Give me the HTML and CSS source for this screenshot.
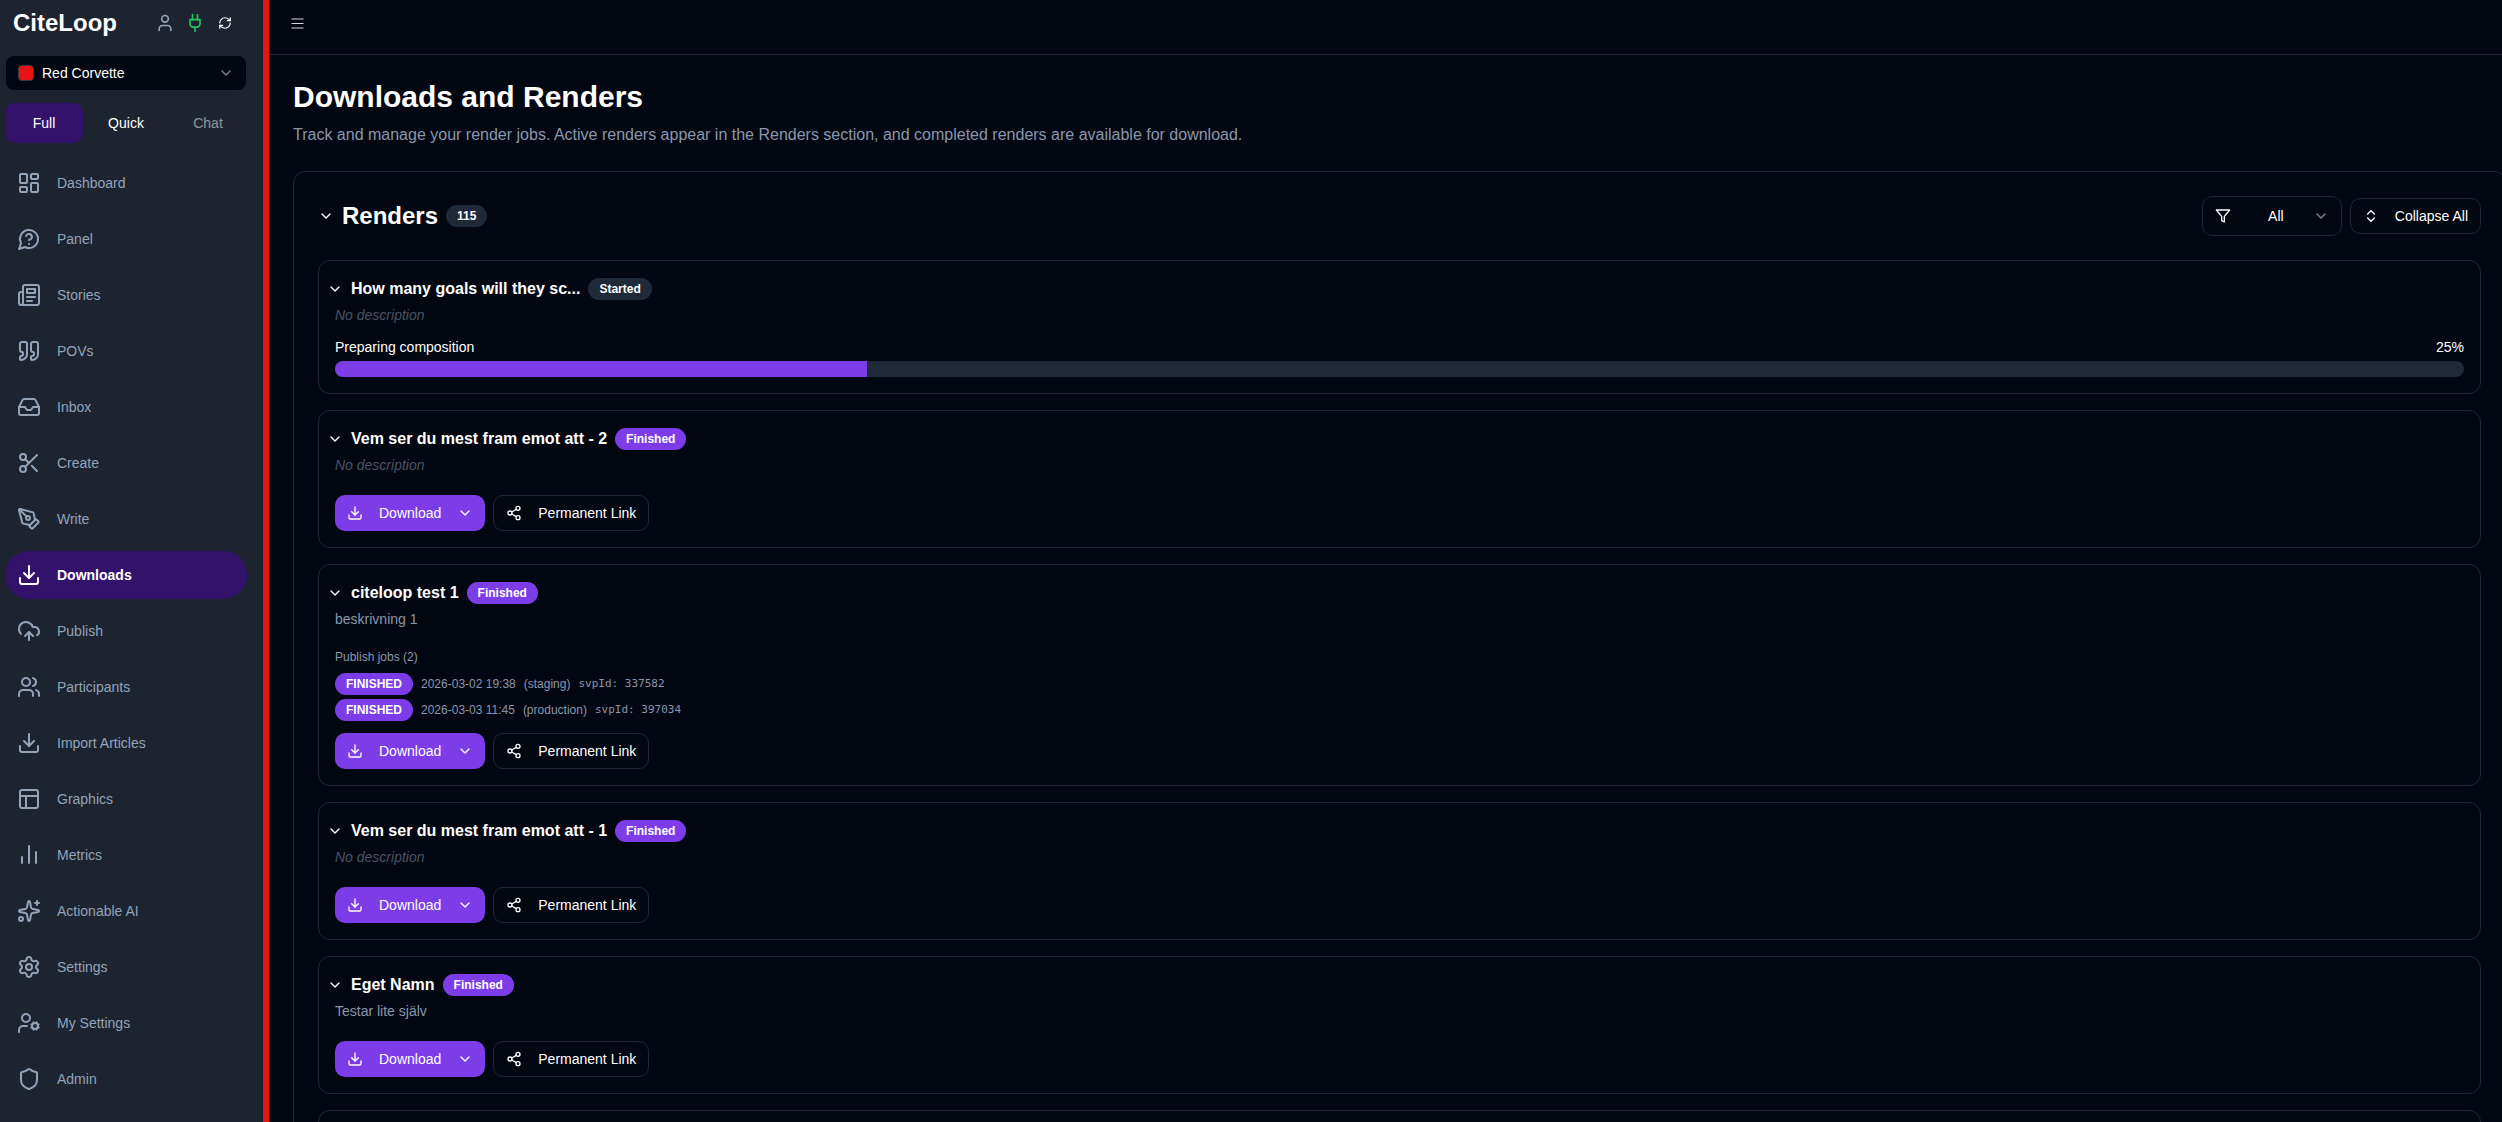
FILE: index.html
```html
<!DOCTYPE html>
<html lang="en">
<head>
<meta charset="utf-8">
<meta name="viewport" content="width=device-width, initial-scale=1">
<title>CiteLoop - Downloads and Renders</title>
<link rel="stylesheet" href="styles.css">
</head>
<body>

<!-- icon sprite -->
<svg class="sprite" aria-hidden="true">
	<symbol id="i-chevron" viewBox="0 0 24 24"><path d="m6 9 6 6 6-6"/></symbol>
	<symbol id="i-user" viewBox="0 0 24 24"><path d="M19 21v-2a4 4 0 0 0-4-4H9a4 4 0 0 0-4 4v2"/><circle cx="12" cy="7" r="4"/></symbol>
	<symbol id="i-plug" viewBox="0 0 24 24"><path d="M12 22v-5"/><path d="M9 8V2"/><path d="M15 8V2"/><path d="M18 8v5a4 4 0 0 1-4 4h-4a4 4 0 0 1-4-4V8Z"/></symbol>
	<symbol id="i-refresh" viewBox="0 0 24 24"><path d="M3 12a9 9 0 0 1 9-9 9.75 9.75 0 0 1 6.74 2.74L21 8"/><path d="M21 3v5h-5"/><path d="M21 12a9 9 0 0 1-9 9 9.75 9.75 0 0 1-6.74-2.74L3 16"/><path d="M8 16H3v5"/></symbol>
	<symbol id="i-menu" viewBox="0 0 15 15"><path d="M1.5 3h12M1.5 7.5h12M1.5 12h12"/></symbol>
	<symbol id="i-dashboard" viewBox="0 0 24 24"><rect width="7" height="9" x="3" y="3" rx="1"/><rect width="7" height="5" x="14" y="3" rx="1"/><rect width="7" height="9" x="14" y="12" rx="1"/><rect width="7" height="5" x="3" y="16" rx="1"/></symbol>
	<symbol id="i-panel" viewBox="0 0 24 24"><path d="M7.9 20A9 9 0 1 0 4 16.1L2 22Z"/><path d="M9.09 9a3 3 0 0 1 5.83 1c0 2-3 3-3 3"/><path d="M12 17h.01"/></symbol>
	<symbol id="i-stories" viewBox="0 0 24 24"><path d="M4 22h16a2 2 0 0 0 2-2V4a2 2 0 0 0-2-2H8a2 2 0 0 0-2 2v16a2 2 0 0 1-2 2Zm0 0a2 2 0 0 1-2-2v-9c0-1.1.9-2 2-2h2"/><path d="M18 14h-8"/><path d="M15 18h-5"/><path d="M10 6h8v4h-8V6Z"/></symbol>
	<symbol id="i-quote" viewBox="0 0 24 24"><path d="M16 3a2 2 0 0 0-2 2v6a2 2 0 0 0 2 2 1 1 0 0 1 1 1v1a2 2 0 0 1-2 2 1 1 0 0 0-1 1v2a1 1 0 0 0 1 1 6 6 0 0 0 6-6V5a2 2 0 0 0-2-2z"/><path d="M5 3a2 2 0 0 0-2 2v6a2 2 0 0 0 2 2 1 1 0 0 1 1 1v1a2 2 0 0 1-2 2 1 1 0 0 0-1 1v2a1 1 0 0 0 1 1 6 6 0 0 0 6-6V5a2 2 0 0 0-2-2z"/></symbol>
	<symbol id="i-inbox" viewBox="0 0 24 24"><path d="M22 12h-6l-2 3h-4l-2-3H2"/><path d="M5.45 5.11 2 12v6a2 2 0 0 0 2 2h16a2 2 0 0 0 2-2v-6l-3.45-6.89A2 2 0 0 0 16.76 4H7.24a2 2 0 0 0-1.79 1.11z"/></symbol>
	<symbol id="i-scissors" viewBox="0 0 24 24"><circle cx="6" cy="6" r="3"/><path d="M8.12 8.12 12 12"/><path d="M20 4 8.12 15.88"/><circle cx="6" cy="18" r="3"/><path d="M14.8 14.8 20 20"/></symbol>
	<symbol id="i-pen" viewBox="0 0 24 24"><path d="M15.707 21.293a1 1 0 0 1-1.414 0l-1.586-1.586a1 1 0 0 1 0-1.414l5.586-5.586a1 1 0 0 1 1.414 0l1.586 1.586a1 1 0 0 1 0 1.414z"/><path d="m18 13-1.375-6.874a1 1 0 0 0-.746-.776L3.235 2.028a1 1 0 0 0-1.207 1.207L5.35 15.879a1 1 0 0 0 .776.746L13 18"/><path d="m2.3 2.3 7.286 7.286"/><circle cx="11" cy="11" r="2"/></symbol>
	<symbol id="i-download" viewBox="0 0 24 24"><path d="M21 15v4a2 2 0 0 1-2 2H5a2 2 0 0 1-2-2v-4"/><path d="m7 10 5 5 5-5"/><path d="M12 15V3"/></symbol>
	<symbol id="i-cloud" viewBox="0 0 24 24"><path d="M12 13v8"/><path d="M4 14.899A7 7 0 1 1 15.71 8h1.79a4.5 4.5 0 0 1 2.5 8.242"/><path d="m8 17 4-4 4 4"/></symbol>
	<symbol id="i-users" viewBox="0 0 24 24"><path d="M16 21v-2a4 4 0 0 0-4-4H6a4 4 0 0 0-4 4v2"/><circle cx="9" cy="7" r="4"/><path d="M22 21v-2a4 4 0 0 0-3-3.87"/><path d="M16 3.13a4 4 0 0 1 0 7.75"/></symbol>
	<symbol id="i-layout" viewBox="0 0 24 24"><rect width="18" height="18" x="3" y="3" rx="2"/><path d="M3 9h18"/><path d="M9 21V9"/></symbol>
	<symbol id="i-metrics" viewBox="0 0 24 24"><path d="M5 20v-6"/><path d="M12 20V3"/><path d="M19 20V9"/></symbol>
	<symbol id="i-sparkles" viewBox="0 0 24 24"><path d="M11.017 2.814a1 1 0 0 1 1.966 0l1.051 5.558a2 2 0 0 0 1.594 1.594l5.558 1.051a1 1 0 0 1 0 1.966l-5.558 1.051a2 2 0 0 0-1.594 1.594l-1.051 5.558a1 1 0 0 1-1.966 0l-1.051-5.558a2 2 0 0 0-1.594-1.594l-5.558-1.051a1 1 0 0 1 0-1.966l5.558-1.051a2 2 0 0 0 1.594-1.594z"/><path d="M20 2v4"/><path d="M22 4h-4"/><circle cx="4" cy="20" r="2"/></symbol>
	<symbol id="i-settings" viewBox="0 0 24 24"><path d="M9.671 4.136a2.34 2.34 0 0 1 4.659 0 2.34 2.34 0 0 0 3.319 1.915 2.34 2.34 0 0 1 2.33 4.033 2.34 2.34 0 0 0 0 3.831 2.34 2.34 0 0 1-2.33 4.033 2.34 2.34 0 0 0-3.319 1.915 2.34 2.34 0 0 1-4.659 0 2.34 2.34 0 0 0-3.32-1.915 2.34 2.34 0 0 1-2.33-4.033 2.34 2.34 0 0 0 0-3.831A2.34 2.34 0 0 1 6.35 6.051a2.34 2.34 0 0 0 3.319-1.915"/><circle cx="12" cy="12" r="3"/></symbol>
	<symbol id="i-usercog" viewBox="0 0 24 24"><path d="M10 15H6a4 4 0 0 0-4 4v2"/><circle cx="9" cy="7" r="4"/><circle cx="18" cy="15" r="3"/><path d="m14.305 16.53.923-.382M15.228 13.852l-.923-.383M16.852 12.228l-.383-.923M16.852 17.772l-.383.924M19.148 12.228l.383-.923M19.53 18.696l-.382-.924M20.772 13.852l.924-.383M20.772 16.148l.924.383"/></symbol>
	<symbol id="i-shield" viewBox="0 0 24 24"><path d="M20 13c0 5-3.5 7.5-7.66 8.95a1 1 0 0 1-.67-.01C7.5 20.5 4 18 4 13V6a1 1 0 0 1 1-1c2 0 4.5-1.2 6.24-2.72a1.17 1.17 0 0 1 1.52 0C14.51 3.81 17 5 19 5a1 1 0 0 1 1 1z"/></symbol>
	<symbol id="i-filter" viewBox="0 0 24 24"><path d="M22 3H2l8 9.46V19l4 2v-8.54L22 3z"/></symbol>
	<symbol id="i-updown" viewBox="0 0 24 24"><path d="m7 15 5 5 5-5"/><path d="m7 9 5-5 5 5"/></symbol>
	<symbol id="i-share" viewBox="0 0 24 24"><circle cx="18" cy="5" r="3"/><circle cx="6" cy="12" r="3"/><circle cx="18" cy="19" r="3"/><path d="m8.59 13.51 6.83 3.98"/><path d="m15.41 6.51-6.82 3.98"/></symbol>
</svg>

<div class="app">
	<aside class="sidebar">
		<div class="brand">
			<span class="logo">CiteLoop</span>
			<div class="brand_icons">
				<button class="icon_btn" aria-label="Account"><svg class="icon md"><use href="#i-user"/></svg></button>
				<button class="icon_btn online" aria-label="Connection"><svg class="icon md"><use href="#i-plug"/></svg></button>
				<button class="icon_btn light" aria-label="Refresh"><svg class="icon xs"><use href="#i-refresh"/></svg></button>
			</div>
		</div>

		<div class="team">
			<span class="swatch"></span>
			<select class="plain_select" aria-label="Team">
				<option>Red Corvette</option>
			</select>
			<svg class="icon dim"><use href="#i-chevron"/></svg>
		</div>

		<div class="modes">
			<button class="mode active">Full</button>
			<button class="mode">Quick</button>
			<button class="mode" disabled>Chat</button>
		</div>

		<nav class="nav">
			<a href="#"><svg class="icon lg"><use href="#i-dashboard"/></svg>Dashboard</a>
			<a href="#"><svg class="icon lg"><use href="#i-panel"/></svg>Panel</a>
			<a href="#"><svg class="icon lg"><use href="#i-stories"/></svg>Stories</a>
			<a href="#"><svg class="icon lg"><use href="#i-quote"/></svg>POVs</a>
			<a href="#"><svg class="icon lg"><use href="#i-inbox"/></svg>Inbox</a>
			<a href="#"><svg class="icon lg"><use href="#i-scissors"/></svg>Create</a>
			<a href="#"><svg class="icon lg"><use href="#i-pen"/></svg>Write</a>
			<a href="#" class="active"><svg class="icon lg"><use href="#i-download"/></svg>Downloads</a>
			<a href="#"><svg class="icon lg"><use href="#i-cloud"/></svg>Publish</a>
			<a href="#"><svg class="icon lg"><use href="#i-users"/></svg>Participants</a>
			<a href="#"><svg class="icon lg"><use href="#i-download"/></svg>Import Articles</a>
			<a href="#"><svg class="icon lg"><use href="#i-layout"/></svg>Graphics</a>
			<a href="#"><svg class="icon lg"><use href="#i-metrics"/></svg>Metrics</a>
			<a href="#"><svg class="icon lg"><use href="#i-sparkles"/></svg>Actionable AI</a>
			<a href="#"><svg class="icon lg"><use href="#i-settings"/></svg>Settings</a>
			<a href="#"><svg class="icon lg"><use href="#i-usercog"/></svg>My Settings</a>
			<a href="#"><svg class="icon lg"><use href="#i-shield"/></svg>Admin</a>
		</nav>
	</aside>

	<div class="main">
		<header class="topbar">
			<button class="icon_btn menu_btn" aria-label="Toggle menu"><svg class="icon menu_icon"><use href="#i-menu"/></svg></button>
		</header>

		<main class="content">
			<h1>Downloads and Renders</h1>
			<p class="lead">Track and manage your render jobs. Active renders appear in the Renders section, and completed renders are available for download.</p>

			<section class="panel">
				<div class="panel_head">
					<button class="icon_btn light" aria-label="Collapse section"><svg class="icon"><use href="#i-chevron"/></svg></button>
					<h2>Renders</h2>
					<span class="badge">115</span>
					<div class="panel_tools">
						<div class="filter">
							<svg class="icon"><use href="#i-filter"/></svg>
							<select class="plain_select" aria-label="Filter">
								<option>All</option>
							</select>
							<svg class="icon dim"><use href="#i-chevron"/></svg>
						</div>
						<button class="btn"><svg class="icon"><use href="#i-updown"/></svg>Collapse All</button>
					</div>
				</div>

				<article class="card">
					<div class="card_head">
						<button class="icon_btn light" aria-label="Collapse"><svg class="icon"><use href="#i-chevron"/></svg></button>
						<h3>How many goals will they sc...</h3>
						<span class="badge">Started</span>
					</div>
					<p class="desc empty">No description</p>
					<div class="progress">
						<div class="progress_label"><span id="p1">Preparing composition</span><span>25%</span></div>
						<div class="bar" role="progressbar" aria-labelledby="p1" aria-valuenow="25"><div class="bar_fill" style="width: 25%"></div></div>
					</div>
				</article>

				<article class="card">
					<div class="card_head">
						<button class="icon_btn light" aria-label="Collapse"><svg class="icon"><use href="#i-chevron"/></svg></button>
						<h3>Vem ser du mest fram emot att - 2</h3>
						<span class="badge done">Finished</span>
					</div>
					<p class="desc empty">No description</p>
					<div class="actions">
						<button class="btn primary"><svg class="icon"><use href="#i-download"/></svg>Download<svg class="icon"><use href="#i-chevron"/></svg></button>
						<button class="btn"><svg class="icon"><use href="#i-share"/></svg>Permanent Link</button>
					</div>
				</article>

				<article class="card">
					<div class="card_head">
						<button class="icon_btn light" aria-label="Collapse"><svg class="icon"><use href="#i-chevron"/></svg></button>
						<h3>citeloop test 1</h3>
						<span class="badge done">Finished</span>
					</div>
					<p class="desc">beskrivning 1</p>
					<div class="jobs">
						<p class="jobs_title">Publish jobs (2)</p>
						<div class="job"><span class="badge done">FINISHED</span><span>2026-03-02 19:38</span><span>(staging)</span><code>svpId: 337582</code></div>
						<div class="job"><span class="badge done">FINISHED</span><span>2026-03-03 11:45</span><span>(production)</span><code>svpId: 397034</code></div>
					</div>
					<div class="actions">
						<button class="btn primary"><svg class="icon"><use href="#i-download"/></svg>Download<svg class="icon"><use href="#i-chevron"/></svg></button>
						<button class="btn"><svg class="icon"><use href="#i-share"/></svg>Permanent Link</button>
					</div>
				</article>

				<article class="card">
					<div class="card_head">
						<button class="icon_btn light" aria-label="Collapse"><svg class="icon"><use href="#i-chevron"/></svg></button>
						<h3>Vem ser du mest fram emot att - 1</h3>
						<span class="badge done">Finished</span>
					</div>
					<p class="desc empty">No description</p>
					<div class="actions">
						<button class="btn primary"><svg class="icon"><use href="#i-download"/></svg>Download<svg class="icon"><use href="#i-chevron"/></svg></button>
						<button class="btn"><svg class="icon"><use href="#i-share"/></svg>Permanent Link</button>
					</div>
				</article>

				<article class="card">
					<div class="card_head">
						<button class="icon_btn light" aria-label="Collapse"><svg class="icon"><use href="#i-chevron"/></svg></button>
						<h3>Eget Namn</h3>
						<span class="badge done">Finished</span>
					</div>
					<p class="desc">Testar lite själv</p>
					<div class="actions">
						<button class="btn primary"><svg class="icon"><use href="#i-download"/></svg>Download<svg class="icon"><use href="#i-chevron"/></svg></button>
						<button class="btn"><svg class="icon"><use href="#i-share"/></svg>Permanent Link</button>
					</div>
				</article>

				<article class="card next"></article>
			</section>
		</main>
	</div>
</div>
</body>
</html>
```
FILE: styles.css
```css
* {
	box-sizing: border-box;
}
body {
	margin: 0;
	background: #030711;
	color: #fff;
	font: 14px/20px "Liberation Sans", Arial, Helvetica, sans-serif;
}
h1, h2, h3, p {
	margin: 0;
}
button, select {
	font: inherit;
	color: inherit;
}
.sprite {
	display: none;
}
.icon {
	width: 16px;
	height: 16px;
	flex: none;
	fill: none;
	stroke: currentColor;
	stroke-width: 2;
	stroke-linecap: round;
	stroke-linejoin: round;
}
.icon.xs {
	width: 14px;
	height: 14px;
}
.icon.md {
	width: 20px;
	height: 20px;
}
.icon.lg {
	width: 24px;
	height: 24px;
}
.icon.dim {
	opacity: 0.5;
}
.icon_btn {
	display: flex;
	padding: 0;
	border: 0;
	background: none;
	color: #94a3b8;
	cursor: pointer;
}
.icon_btn.light {
	color: #fff;
}
.icon_btn.online {
	color: #22c55e;
}
.plain_select {
	flex: 1;
	min-width: 0;
	padding: 0;
	border: 0;
	background: transparent;
	appearance: none;
}

/* page shell */
.app {
	display: flex;
	height: 100vh;
	overflow: hidden;
}
.main {
	flex: 1;
	min-width: 0;
	overflow: hidden;
}

/* sidebar */
.sidebar {
	width: 269px;
	flex: none;
	background: #1d2430;
	border-right: 6px solid #e81313;
	padding: 8px 16px 0 5px;
}
.brand {
	display: flex;
	align-items: center;
	height: 30px;
	padding: 0 12px 0 8px;
	justify-content: space-between;
}
.logo {
	font-size: 24px;
	line-height: 30px;
	font-weight: bold;
}
.brand_icons {
	display: flex;
	align-items: center;
	gap: 10px;
}
.brand_icons .light {
	padding: 0 3px;
}
.team {
	display: flex;
	align-items: center;
	gap: 8px;
	height: 34px;
	margin: 18px 1px 0;
	padding: 0 12px;
	border-radius: 8px;
	background: #030711;
}
.swatch {
	width: 16px;
	height: 16px;
	border: 1px solid #3b3a45;
	border-radius: 4px;
	background: #e81313;
}
.modes {
	display: grid;
	grid-template-columns: repeat(3, 1fr);
	gap: 4px;
	margin: 13px 0 16px;
}
.mode {
	height: 40px;
	padding: 0;
	border: 0;
	border-radius: 10px;
	background: none;
}
.mode:disabled {
	opacity: 0.5;
}
.mode.active {
	background: #33126b;
}
.nav {
	display: flex;
	flex-direction: column;
	gap: 8px;
}
.nav a {
	display: flex;
	align-items: center;
	gap: 16px;
	height: 48px;
	padding: 0 12px;
	border-radius: 24px;
	color: #94a3b8;
	text-decoration: none;
}
.nav a.active {
	background: #33126b;
	color: #fff;
	font-weight: bold;
}

/* top bar */
.topbar {
	display: flex;
	align-items: flex-start;
	height: 55px;
	padding: 15px 20px;
	border-bottom: 1px solid #1d2735;
}
.menu_btn {
	align-items: center;
	justify-content: center;
	width: 16px;
	height: 16px;
	color: #d4d6d9;
}
.menu_icon {
	width: 15px;
	height: 15px;
	stroke-width: 1;
	stroke-linecap: butt;
}

/* content */
.content {
	padding: 24px;
}
h1 {
	font-size: 30px;
	line-height: 36px;
}
.lead {
	margin: 8px 0 24px;
	font-size: 16px;
	line-height: 24px;
	color: #8997ac;
}
.panel {
	display: flex;
	flex-direction: column;
	gap: 16px;
	margin-right: -28px;
	padding: 24px;
	border: 1px solid #1d2735;
	border-radius: 12px;
}
.panel_head {
	display: flex;
	align-items: center;
	gap: 8px;
	margin-bottom: 8px;
}
h2 {
	font-size: 24px;
	line-height: 24px;
}
.panel_tools {
	display: flex;
	align-items: center;
	gap: 8px;
	margin-left: auto;
}
.filter {
	display: flex;
	align-items: center;
	gap: 8px;
	width: 140px;
	height: 40px;
	padding: 0 12px;
	border: 1px solid #1d2735;
	border-radius: 10px;
}
.filter .dim {
	margin-left: -8px;
}
.filter .plain_select {
	text-align-last: center;
}
.badge {
	padding: 3px 11px;
	border-radius: 11px;
	background: #1f2937;
	font-size: 12px;
	line-height: 16px;
	font-weight: bold;
}
.badge.done {
	background: #7c3ce8;
}
.btn {
	display: flex;
	align-items: center;
	gap: 16px;
	height: 36px;
	padding: 0 12px;
	border: 1px solid #1d2735;
	border-radius: 10px;
	background: none;
	cursor: pointer;
}
.btn.primary {
	border: 0;
	background: #7c3ce8;
}

/* render cards */
.card {
	padding: 16px;
	border: 1px solid #1d2735;
	border-radius: 12px;
}
.card.next {
	height: 138px;
}
.card_head {
	display: flex;
	align-items: center;
	gap: 8px;
	margin-left: -8px;
}
h3 {
	font-size: 16px;
	line-height: 24px;
}
.desc {
	margin-top: 4px;
	color: #8997ac;
}
.desc.empty {
	color: #4a5462;
	font-style: italic;
}
.progress {
	margin-top: 12px;
}
.progress_label {
	display: flex;
	justify-content: space-between;
}
.bar {
	height: 16px;
	margin-top: 4px;
	border-radius: 8px;
	background: #1f2937;
	overflow: hidden;
}
.bar_fill {
	height: 100%;
	background: #7c3ce8;
}
.actions {
	display: flex;
	gap: 8px;
	margin-top: 20px;
}
.jobs {
	display: flex;
	flex-direction: column;
	gap: 4px;
	margin-top: 20px;
	font-size: 12px;
	line-height: 16px;
	color: #8997ac;
}
.jobs + .actions {
	margin-top: 12px;
}
.jobs_title {
	margin-bottom: 4px;
}
.job {
	display: flex;
	align-items: center;
	gap: 8px;
}
.job .badge {
	color: #fff;
}
.job code {
	font: 11px/16px "DejaVu Sans Mono", monospace;
}
```
